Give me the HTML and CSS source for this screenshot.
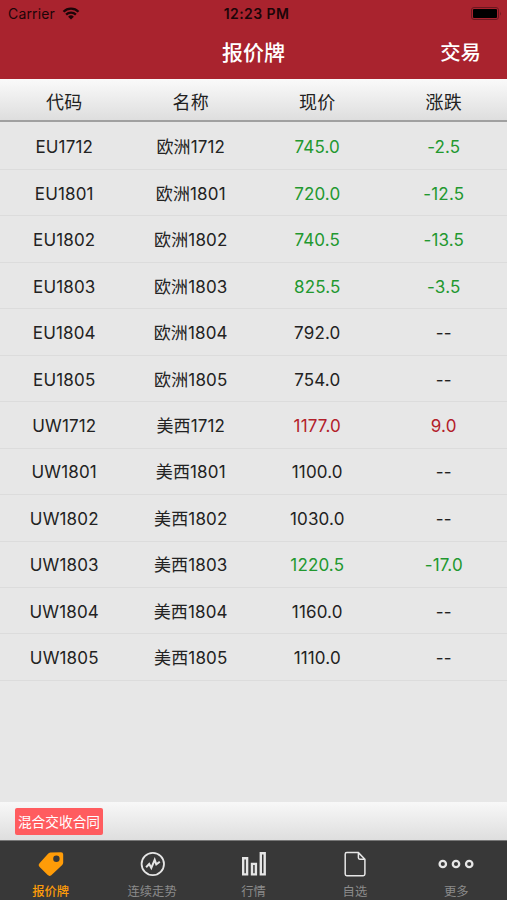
FILE: index.html
```html
<!DOCTYPE html>
<html lang="zh-CN">
<head>
  <meta charset="UTF-8">
  <meta name="viewport" content="width=device-width, initial-scale=1.0">
  <title>报价牌</title>
  <link rel="stylesheet" href="styles.css">
</head>
<body>
  <div class="app">
    <header class="header">
      <div class="status-bar">
        <div class="carrier">
          <span>Carrier</span>
          <svg class="wifi" viewBox="0 0 18 13">
            <path d="M1.5 4.8a10.6 10.6 0 0 1 15 0M4.1 7.6a6.9 6.9 0 0 1 9.8 0" fill="none" stroke="#1c0508" stroke-width="2.3"/>
            <path d="M9 12.6L6.1 9.7a4.1 4.1 0 0 1 5.8 0z" fill="#1c0508"/>
          </svg>
        </div>
        <span class="time">12:23 PM</span>
        <svg class="battery" viewBox="0 0 32 13">
          <rect x=".5" y=".5" width="27" height="12" rx="2.5" fill="none" stroke="#6b1820"/>
          <rect x="2" y="2" width="24" height="9" rx="1" fill="#000"/>
          <path d="M29.2 4.4q1.6 2.1 0 4.2z" fill="#6b1820"/>
        </svg>
      </div>
      <div class="nav-bar">
        <h1>报价牌</h1>
        <a class="trade" href="#">交易</a>
      </div>
    </header>

    <div class="row table-head">
      <span>代码</span><span>名称</span><span>现价</span><span>涨跌</span>
    </div>
    <main class="quotes">
      <div class="row"><span>EU1712</span><span>欧洲1712</span><span class="down">745.0</span><span class="down">-2.5</span></div>
      <div class="row"><span>EU1801</span><span>欧洲1801</span><span class="down">720.0</span><span class="down">-12.5</span></div>
      <div class="row"><span>EU1802</span><span>欧洲1802</span><span class="down">740.5</span><span class="down">-13.5</span></div>
      <div class="row"><span>EU1803</span><span>欧洲1803</span><span class="down">825.5</span><span class="down">-3.5</span></div>
      <div class="row"><span>EU1804</span><span>欧洲1804</span><span>792.0</span><span>--</span></div>
      <div class="row"><span>EU1805</span><span>欧洲1805</span><span>754.0</span><span>--</span></div>
      <div class="row"><span>UW1712</span><span>美西1712</span><span class="up">1177.0</span><span class="up">9.0</span></div>
      <div class="row"><span>UW1801</span><span>美西1801</span><span>1100.0</span><span>--</span></div>
      <div class="row"><span>UW1802</span><span>美西1802</span><span>1030.0</span><span>--</span></div>
      <div class="row"><span>UW1803</span><span>美西1803</span><span class="down">1220.5</span><span class="down">-17.0</span></div>
      <div class="row"><span>UW1804</span><span>美西1804</span><span>1160.0</span><span>--</span></div>
      <div class="row"><span>UW1805</span><span>美西1805</span><span>1110.0</span><span>--</span></div>
    </main>

    <div class="filter-bar">
      <button class="filter">混合交收合同</button>
    </div>

    <nav class="tab-bar">
      <a class="tab active" href="#">
        <svg viewBox="0 0 28 28">
          <path fill-rule="evenodd" fill="#ff9c08" d="M13.4 2.5L24 2.3Q26.2 2.3 26.2 4.5V12.6Q26.2 14 25.2 15L14.3 25.2Q12.4 26.7 10.7 25.1L2.4 16.7Q.7 14.8 2.5 13.2L10.6 4.2Q12 2.6 13.4 2.5zM19.4 5.6a3.2 3.2 0 1 0 0 6.4a3.2 3.2 0 0 0 0-6.4z"/>
        </svg>
        <span>报价牌</span>
      </a>
      <a class="tab" href="#">
        <svg viewBox="0 0 28 28">
          <circle cx="14.8" cy="14" r="11.2"/>
          <path d="M8.1 17.2L11.2 14L13.3 18L16.7 9.8L18.3 14.4L21.8 11.8" stroke-width="2"/>
        </svg>
        <span>连续走势</span>
      </a>
      <a class="tab" href="#">
        <svg viewBox="0 0 28 28">
          <path d="M3.2 8.2h3.9v16.2H3.2zM12 13.9h3.9v10.5H12zM20.8 3.2h3.9v21.2h-3.9z" stroke-width="2.4"/>
        </svg>
        <span>行情</span>
      </a>
      <a class="tab" href="#">
        <svg viewBox="0 0 28 28">
          <path d="M5.8 2.6H17.4L23.9 9.2V24Q23.9 25.7 22.2 25.7H5.8Q4.2 25.7 4.2 24V4.2Q4.2 2.6 5.8 2.6zM17.4 2.6V7.8Q17.4 9.2 18.8 9.2H23.9" stroke-width="1.5"/>
        </svg>
        <span>自选</span>
      </a>
      <a class="tab" href="#">
        <svg class="more" viewBox="0 0 36 28">
          <g stroke-width="2.3"><circle cx="4.8" cy="14" r="3.2"/><circle cx="18" cy="14" r="3.2"/><circle cx="31.2" cy="14" r="3.2"/></g>
        </svg>
        <span>更多</span>
      </a>
    </nav>
  </div>
</body>
</html>
```
FILE: styles.css
```css
* {
  box-sizing: border-box;
  margin: 0;
  padding: 0;
}
body {
  font-family: Inter, "Noto Sans CJK SC", sans-serif;
  color: #222;
}
a {
  color: inherit;
  text-decoration: none;
}
.app {
  display: flex;
  flex-direction: column;
  height: 100vh;
  background: #e7e7e7;
}

/* Header */
.header {
  height: 79px;
  background: #a9232e;
}
.status-bar {
  display: grid;
  grid-template-columns: 1fr auto 1fr;
  align-items: center;
  height: 27px;
  padding: 0 4px 0 8px;
  font-size: 14px;
  color: #1c0508;
}
.carrier {
  display: flex;
  align-items: center;
  gap: 7px;
  letter-spacing: 0.15px;
}
.wifi {
  width: 18px;
  height: 13px;
}
.time {
  padding-left: 2px;
  font-weight: 600;
  letter-spacing: 0.4px;
}
.battery {
  width: 32px;
  height: 13px;
  justify-self: end;
}
.nav-bar {
  display: grid;
  grid-template-columns: 1fr auto 1fr;
  align-items: center;
  height: 48px;
  padding: 0 26px;
  color: #fff;
}
.nav-bar h1 {
  grid-column: 2;
  font-size: 21px;
  font-weight: 500;
}
.trade {
  justify-self: end;
  font-size: 20.4px;
  font-weight: 500;
}

/* Quote table */
.row {
  display: grid;
  grid-template-columns: repeat(4, 1fr);
  align-items: center;
  height: 46.45px;
  padding: 2px 0 0 1px;
  border-bottom: 1px solid #dcdcdc;
  text-align: center;
  font-size: 17px;
  letter-spacing: 0.15px;
  line-height: 26px;
}
.table-head {
  height: 43px;
  padding-top: 7px;
  font-size: 18px;
  background: linear-gradient(#fafafa, #dedede);
  border-bottom: 2px solid #a0a0a0;
}
.quotes {
  flex: 1;
  padding-top: 1.6px;
}
.down {
  color: #22982f;
}
.up {
  color: #b3202a;
}

/* Filter strip */
.filter-bar {
  height: 38px;
  padding: 6px 15px;
  background: linear-gradient(#f8f8f8, #dedede);
}
.filter {
  display: block;
  width: 88px;
  height: 27px;
  padding-bottom: 2px;
  border: 0;
  border-radius: 2px;
  background: #ff5c5f;
  color: #fff;
  font: 13.7px "Noto Sans CJK SC", sans-serif;
  white-space: nowrap;
}

/* Tab bar */
.tab-bar {
  display: flex;
  height: 60px;
  border-top: 1px solid #777;
  background: #383838;
}
.tab {
  flex: 1;
  display: flex;
  flex-direction: column;
  align-items: center;
  padding-top: 9px;
  font-size: 12.3px;
  line-height: 16px;
  color: #8b8b8b;
}
.tab svg {
  flex: none;
  width: 28px;
  height: 28px;
  margin-bottom: 6px;
  fill: none;
  stroke: #e6e6e6;
  stroke-width: 1.8;
}
.tab .more {
  width: 36px;
}
.active {
  color: #ff9c08;
  font-weight: 500;
}
.tab.active svg {
  stroke: none;
}
```
